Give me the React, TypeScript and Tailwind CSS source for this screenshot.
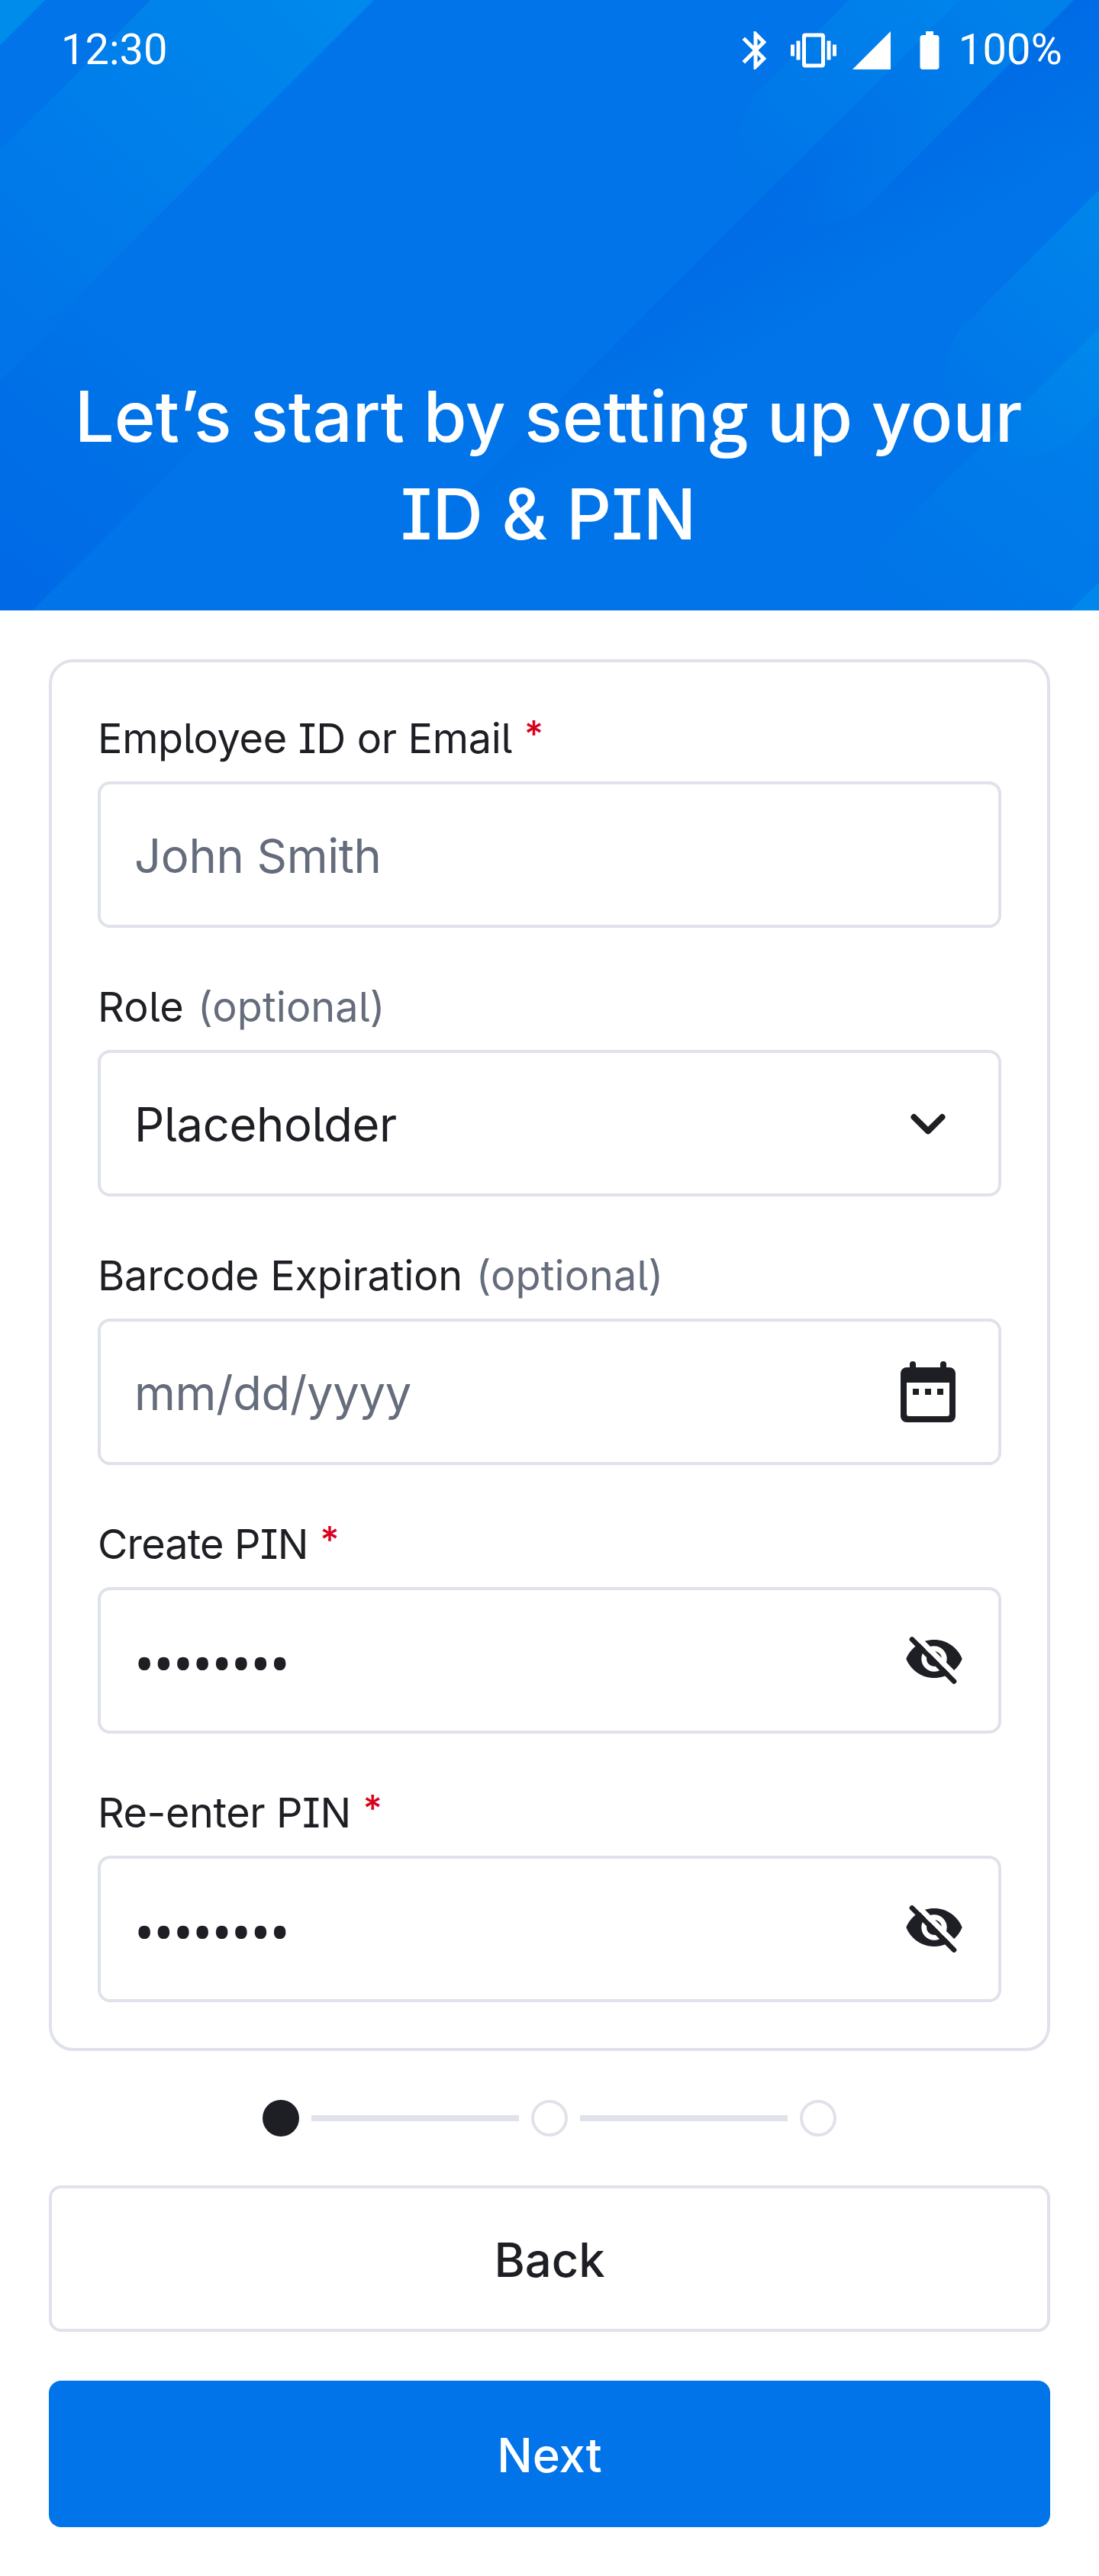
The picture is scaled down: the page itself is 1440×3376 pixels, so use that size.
import type { ReactNode } from "react";

function HeaderArt() {
  return (
    <svg className="absolute inset-0 h-full w-full" viewBox="0 0 1440 800" preserveAspectRatio="none" aria-hidden="true">
      <defs>
        <linearGradient id="bandLeft" gradientUnits="userSpaceOnUse" x1="400" y1="-60" x2="-40" y2="400">
          <stop offset="0" stopColor="#00a0f0" stopOpacity="0.48" />
          <stop offset="1" stopColor="#00a0f0" stopOpacity="0" />
        </linearGradient>
        <linearGradient id="shadeLeft" gradientUnits="userSpaceOnUse" x1="200" y1="470" x2="-60" y2="800">
          <stop offset="0" stopColor="#0062e4" stopOpacity="0" />
          <stop offset="1" stopColor="#0062e4" stopOpacity="0.7" />
        </linearGradient>
        <linearGradient id="shadeMid" gradientUnits="userSpaceOnUse" x1="1000" y1="256" x2="1089" y2="403">
          <stop offset="0" stopColor="#0068e5" stopOpacity="0.75" />
          <stop offset="1" stopColor="#0068e5" stopOpacity="0" />
        </linearGradient>
        <linearGradient id="bandTop" gradientUnits="userSpaceOnUse" x1="1300" y1="-40" x2="1010" y2="250">
          <stop offset="0" stopColor="#00a0f0" stopOpacity="0.42" />
          <stop offset="1" stopColor="#00a0f0" stopOpacity="0.02" />
        </linearGradient>
        <linearGradient id="bandRight" gradientUnits="userSpaceOnUse" x1="1500" y1="290" x2="1270" y2="560">
          <stop offset="0" stopColor="#00a0f0" stopOpacity="0.42" />
          <stop offset="1" stopColor="#00a0f0" stopOpacity="0.02" />
        </linearGradient>
        <linearGradient id="bandLow" gradientUnits="userSpaceOnUse" x1="1480" y1="420" x2="1180" y2="820">
          <stop offset="0" stopColor="#00a0f0" stopOpacity="0.32" />
          <stop offset="1" stopColor="#00a0f0" stopOpacity="0" />
        </linearGradient>
      </defs>
      <path d="M0 0H59L0 59Z" fill="#008ceb" />
      <path d="M197 0H490L96 394A103 103 0 0 1 -52 249Z" fill="url(#bandLeft)" />
      <path d="M0 499L110 389H453L38 804H0Z" fill="url(#shadeLeft)" />
      <path d="M1257 0H1440V800H457Z" fill="url(#shadeMid)" />
      <path d="M1112 0H1407L1143 264A103.500 103.500 0 0 1 996 117Z" fill="url(#bandTop)" />
      <path d="M1440 249V541L1408 573A103.500 103.500 0 0 1 1262 427Z" fill="url(#bandRight)" />
      <path d="M1440 430V800H1070Z" fill="url(#bandLow)" />
      <path d="M1440 763V800H1403Z" fill="#0087ec" />
    </svg>
  );
}

function StatusIcon({ d }: { d: string }) {
  return (
    <svg className="size-[60px]" viewBox="0 0 24 24" fill="currentColor" aria-hidden="true">
      <path d={d} />
    </svg>
  );
}

function StatusBar() {
  return (
    <div className="relative flex h-[132px] items-center justify-between pr-12 pl-20 font-[Roboto,sans-serif] text-[56px] leading-[66px]">
      <span className="-mt-0.5">12:30</span>
      <div className="flex items-center gap-4">
        <StatusIcon d="M17.71 7.71L12 2h-1v7.59L6.41 5 5 6.41 10.59 12 5 17.59 6.41 19 11 14.41V22h1l5.71-5.71-4.3-4.29 4.3-4.29zM13 5.83l1.88 1.88L13 9.59V5.83zm1.88 10.46L13 18.17v-3.76l1.88 1.88z" />
        <StatusIcon d="M0 15h2V9H0v6zm3 2h2V7H3v10zm19-8v6h2V9h-2zm-3 8h2V7h-2v10zM16.500 3h-9C6.670 3 6 3.670 6 4.500v15c0 .830.670 1.500 1.500 1.500h9c.830 0 1.500-.670 1.500-1.500v-15c0-.830-.670-1.500-1.500-1.500zM16 19H8V5h8v14z" />
        <StatusIcon d="M2 22h20V2z" />
        <StatusIcon d="M15.670 4H14V2h-4v2H8.330C7.600 4 7 4.600 7 5.330v15.330C7 21.400 7.600 22 8.330 22h7.330c.740 0 1.340-.600 1.340-1.330V5.330C17 4.600 16.400 4 15.670 4z" />
        <span className="-mt-0.5 -ml-2 tracking-[0.2px]">100%</span>
      </div>
    </div>
  );
}

function ChevronIcon() {
  return (
    <svg className="size-24" viewBox="0 0 96 96" fill="none" stroke="currentColor" strokeWidth="8" strokeLinecap="round" strokeLinejoin="round" aria-hidden="true">
      <path d="M29.500 40L48 58.300L66.500 40" />
    </svg>
  );
}

function CalendarIcon() {
  return (
    <svg className="size-24" viewBox="0 0 96 96" aria-hidden="true">
      <g fill="currentColor">
        <path fillRule="evenodd" d="M20 16H76A8 8 0 0 1 84 24V80A8 8 0 0 1 76 88H20A8 8 0 0 1 12 80V24A8 8 0 0 1 20 16ZM20 36V77A3 3 0 0 0 23 80H73A3 3 0 0 0 76 77V36Z" />
        <rect x="24" y="8" width="8" height="14" rx="4" />
        <rect x="64" y="8" width="8" height="14" rx="4" />
        <path d="M28 44h8v8h-8zM44 44h8v8h-8zM60 44h8v8h-8z" />
      </g>
    </svg>
  );
}

function EyeOffIcon({ id }: { id: string }) {
  return (
    <svg className="size-20" viewBox="0 0.6 24 24" fill="currentColor" aria-hidden="true">
      <mask id={id} maskUnits="userSpaceOnUse" x="0" y="0" width="24" height="25">
        <rect width="24" height="25" fill="#fff" />
        <circle cx="12" cy="12" r="5" fill="#000" />
        <circle cx="12" cy="12" r="3" fill="#fff" />
        <path d="M3 1.150L23 21.150" stroke="#000" strokeWidth="2.100" />
      </mask>
      <path mask={`url(#${id})`} d="M12 4.500C7 4.500 2.730 7.610 1 12c1.730 4.390 6 7.500 11 7.500s9.270-3.110 11-7.500c-1.730-4.390-6-7.500-11-7.500z" />
      <path d="M3.300 4.350L19.800 20.850" stroke="currentColor" strokeWidth="2" strokeLinecap="round" />
    </svg>
  );
}

type FieldProps = { label: ReactNode; required?: boolean; children: ReactNode; icon?: ReactNode };

function Field({ label, required, children, icon }: FieldProps) {
  return (
    <div className="flex flex-col gap-4">
      <div className="flex h-20 items-center gap-4 text-[54px] leading-[80px]">
        {label}
        {required ? (
          <span className="-mt-3 text-[48px] font-medium text-[#da001e]">*</span>
        ) : (
          <span className="ml-0.5 tracking-[0.1px] text-[#656c7b]">(optional)</span>
        )}
      </div>
      <div className="flex h-48 items-center justify-between rounded-2xl border-4 border-[#dfe2ea] pr-11 pl-11 text-[61.5px] leading-[80px]">
        {children}
        {icon}
      </div>
    </div>
  );
}

function Pin() {
  return <span className="pt-[6px] font-['Noto_Sans',sans-serif] text-[70px] tracking-[-0.95px]">••••••••</span>;
}

function Step({ active }: { active?: boolean }) {
  return <span className={active ? "size-12 rounded-full bg-[#1e1f24]" : "size-12 rounded-full border-4 border-[#dfe2ea]"} />;
}

function StepLine() {
  return <span className="h-2 w-[272px] bg-[#dfe2ea]" />;
}

export default function App() {
  return (
    <div className="min-h-[3376px] w-[1440px] bg-white font-[Inter,sans-serif] text-[#1e1f24] [font-feature-settings:'cv05','cv08']">
      <header className="relative h-[800px] overflow-hidden bg-[#0074e8] text-white">
        <HeaderArt />
        <StatusBar />
        <h1 className="relative mt-[350px] text-center text-[92px] leading-[128px] font-medium">
          <span className="mr-[3px]">
            Let’s start by settin<span className="font-['Open_Sans',sans-serif] leading-none font-semibold">g</span> up your
          </span>
          <br />
          <span className="mr-[3px]">ID &amp; PIN</span>
        </h1>
      </header>

      <main className="flex flex-col gap-16 p-16">
        <section className="flex flex-col gap-16 rounded-[32px] border-4 border-[#dfe2ea] p-[60px]">
          <Field label={<span className="tracking-[-0.33px]">Employee ID or Email</span>} required>
            <span className="pt-[3px] tracking-[-0.3px] text-[#656c7b]">John Smith</span>
          </Field>
          <Field label={<span className="tracking-[0.3px]">Role</span>} icon={<ChevronIcon />}>
            <span className="pt-[3px] tracking-[-0.35px]">Placeholder</span>
          </Field>
          <Field label={<span className="tracking-[-0.22px]">Barcode Expiration</span>} icon={<CalendarIcon />}>
            <span className="pt-[3px] tracking-[-0.25px] text-[#656c7b]">mm/dd/yyyy</span>
          </Field>
          <Field label={<span className="tracking-[-0.85px]">Create PIN</span>} required icon={<EyeOffIcon id="eyeCreate" />}>
            <Pin />
          </Field>
          <Field label={<span className="tracking-[-0.42px]">Re-enter PIN</span>} required icon={<EyeOffIcon id="eyeRepeat" />}>
            <Pin />
          </Field>
        </section>

        <div className="flex items-center justify-center gap-4">
          <Step active />
          <StepLine />
          <Step />
          <StepLine />
          <Step />
        </div>

        <button className="h-48 rounded-2xl border-4 border-[#dfe2ea] pt-[3px] text-[61.5px] leading-[80px] font-medium">
          Back
        </button>
        <button className="h-48 rounded-2xl bg-[#0074e8] pt-[3px] text-[61.5px] leading-[80px] font-medium text-white">
          Next
        </button>
      </main>
    </div>
  );
}
